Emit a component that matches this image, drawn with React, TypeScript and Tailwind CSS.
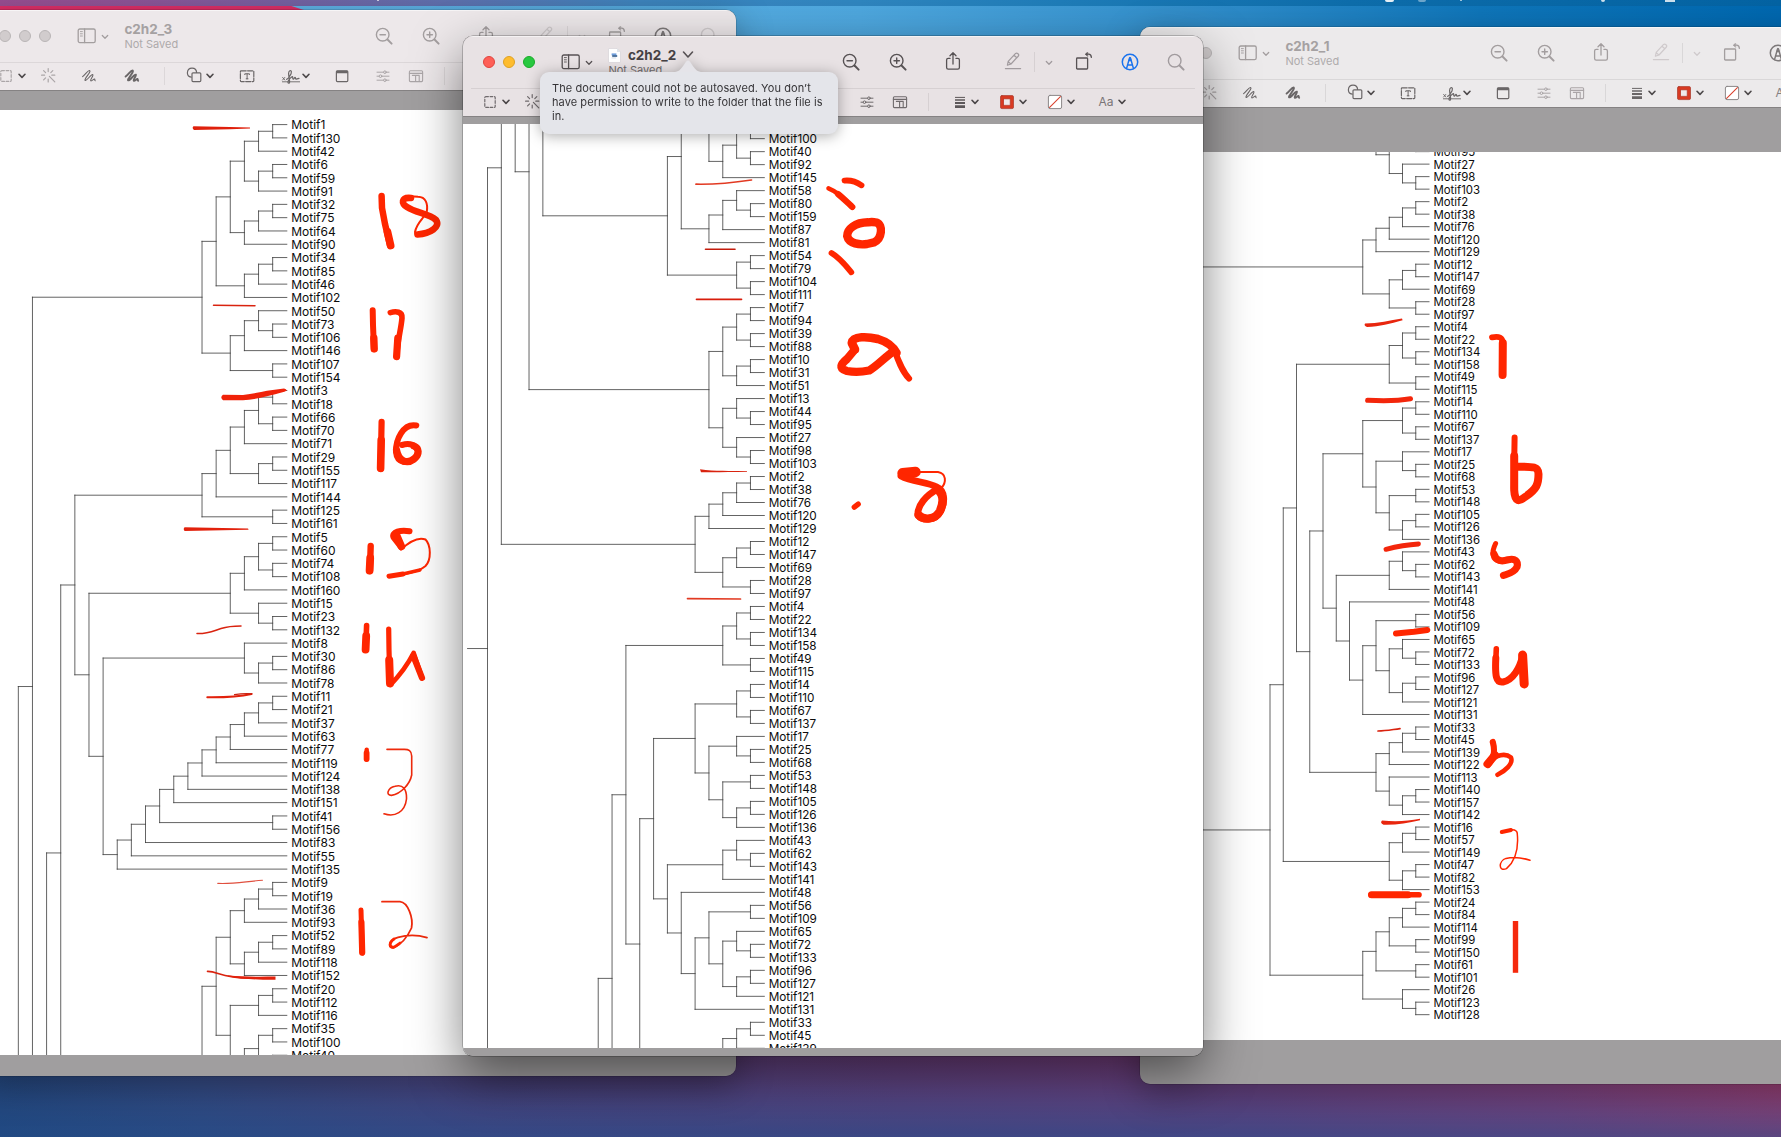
import React from "react";

type Tree = number | [Tree, Tree];

/* Clades of the motif dendrogram, listed top to bottom. */
const cladeA: Tree = [
  [[[[[1, 130], 42], [[6, 59], 91]], [[[32, 75], 64], 90]], [[[34, 85], 46], 102]],
  [[[50, [73, 106]], 146], [107, 154]],
];
const cladeB: Tree = [[[[[[3, 18], [66, 70]], 71], [[29, 155], 117]], 144], [125, 161]];
const cladeC: Tree = [[[[5, 60], [74, 108]], 160], [15, [23, 132]]];
const cladeD: Tree = [8, [[30, 86], 78]];
const cladeE: Tree = [
  [[[[[[[[[[[11, 21], 37], 63], 77], 119], 124], 138], 151], [41, 156]], 83], 55],
  135,
];
const cladeF: Tree = [
  [
    [
      [[[[9, 19], 36], 93], [[[52, 89], 118], 152]],
      [[[20, 112], 116], [[[35, 100], [40, 92]], 145]],
    ],
    [[[58, [80, 159]], 87], 81],
  ],
  [[54, 79], [104, 111]],
];
const cladeG: Tree = [
  [[[7, 94], [39, 88]], [[10, 31], 51]],
  [[13, [44, 95]], [27, [98, 103]]],
];
const cladeH: Tree = [[[[[2, 38], 76], 120], 129], [[[12, 147], 69], [28, 97]]];
const cladeI: Tree = [[[4, 22], [134, 158]], [49, 115]];
const cladeJ: Tree = [
  [[14, 110], [67, 137]],
  [[17, [25, 68]], [[53, 148], [[105, 126], 136]]],
];
const cladeK: Tree = [
  [[43, [62, 143]], 141],
  [48, [[[56, 109], [[65, [72, 133]], [[96, 127], 121]]], 131]],
];
const cladeS: Tree = [[[[33, 45], 139], 122], [113, [[140, 157], 142]]];
const cladeT: Tree = [[[16, 57], 149], [[47, 82], 153]];
const cladeU: Tree = [[[[[24, 84], 114], [99, 150]], [61, 101]], [26, [123, 128]]];

const root: Tree = [
  [[cladeA, [[[cladeB, [cladeC, [cladeD, cladeE]]], cladeF], cladeG]], cladeH],
  [[[cladeI, [[cladeJ, cladeK], cladeS]], cladeT], cladeU],
];

type Seg = [number, number, number, number];
const leaves: number[] = [];
const segs: Seg[] = [];

function walk(t: Tree): { h: number; y: number } {
  if (typeof t === "number") {
    leaves.push(t);
    return { h: 0, y: leaves.length - 1 };
  }
  const a = walk(t[0]);
  const b = walk(t[1]);
  const h = Math.max(a.h, b.h) + 1;
  segs.push([h, a.y, h, b.y], [h, a.y, a.h, a.y], [h, b.y, b.h, b.y]);
  return { h, y: (a.y + b.y) / 2 };
}
const top = walk(root);
segs.push([top.h + 1.44, top.y, top.h, top.y]);

type Ink = { d: string; w?: number; c?: string };

type DocProps = {
  x: number;
  y: number;
  w: number;
  h: number;
  x0: number;
  y0: number;
  dx: number;
  dy: number;
  font: number;
  ink: Ink[];
};

function Dendrogram({ x, y, w, h, x0, y0, dx, dy, font, ink }: DocProps) {
  const d = segs
    .map(
      ([ax, ay, bx, by]) =>
        `M${(x0 - ax * dx).toFixed(2)} ${(y0 + ay * dy).toFixed(2)}L${(x0 - bx * dx).toFixed(2)} ${(y0 + by * dy).toFixed(2)}`,
    )
    .join("");
  return (
    <svg width={w} height={h} viewBox={`${x} ${y} ${w} ${h}`} className="block bg-white">
      <path d={d} stroke="#3c3c3c" strokeWidth={0.8} fill="none" strokeLinecap="square" />
      {leaves.map((n, i) => {
        const ly = y0 + i * dy;
        return ly > y - 10 && ly < y + h + 10 ? (
          <text key={n} x={x0 + 4.4} y={ly + font * 0.4} fontSize={font} fill="#0c0c0c" className="font-['Inter',sans-serif]">
            {"Motif" + n}
          </text>
        ) : null;
      })}
      {ink.map((s, i) =>
        s.w ? (
          <path key={i} d={s.d} stroke={s.c ?? "#ff2600"} strokeWidth={s.w} fill="none" strokeLinecap="round" strokeLinejoin="round" />
        ) : (
          <path key={i} d={s.d} fill={s.c ?? "#ff2600"} />
        ),
      )}
    </svg>
  );
}

const RULE = "#d9230f";

const inkLeft: Ink[] = [
  { d: "M193.5 126.3L230 126.9L250 127.6V128.5L230 129.3L194 129.9Q191.6 128 193.5 126.3Z", c: "#df200c" },
  { d: "M213.5 305.2L255 305.7", w: 1.5, c: RULE },
  { d: "M223 394.8L243 395Q258 393 267 390.8L284 388.4Q287 389 286.5 390.8Q284 392.4 268 396Q252 400.2 243 400.2H223Q219.6 397.5 223 394.8Z", c: "#f02209" },
  { d: "M184.5 527.2L248 528.6L248.6 529.8L184.5 531Q182.8 529 184.5 527.2Z", c: "#e2210c" },
  { d: "M197 633.6C208 634 213 631 221 628.5C228 626.3 234 626 241 626", w: 1.5, c: RULE },
  { d: "M207.3 697.3C225 697.5 238 697 251.5 694", w: 2, c: "#e2210c" },
  { d: "M234.5 694.6C241 693.6 246 693.4 252 693.8", w: 1.2, c: "#c92110" },
  { d: "M217.8 883.4C233 884.3 246 881.4 262.5 880.3", w: 1.1, c: "#e0503f" },
  { d: "M207.5 971.4C218 971.2 220 977.5 250 978.2", w: 1.6, c: RULE },
  { d: "M228 975.6C245 977 262 976.6 275.5 976.6V979.8C260 980 242 979 228 976.4Z", c: "#e2210c" },
  { d: "M381.6 196L382 208L385 224L390.2 245.8", w: 6.5 },
  { d: "M387.5 232L390.6 245.5", w: 7.8 },
  { d: "M411 198C401 197 401 204 407 207C416 213 429 213.5 436 220C441 227 430 233.5 417.5 234.5", w: 6.6 },
  { d: "M410 196.2L418 196.8C426 197 428 204 426.8 211.5C424 219 417 222 415 232C415 235 417 235.5 419 235", w: 2 },
  { d: "M372.7 310.3L373 325L374 349.2", w: 6 },
  { d: "M373.8 338L374.2 348.8", w: 7.4 },
  { d: "M390.3 312.6C396 311 402.5 311.5 402 318C401 330 397.5 340 396.6 357", w: 5.6 },
  { d: "M397.8 338L396.6 356.6", w: 7.2 },
  { d: "M381.6 421.8L380.7 469", w: 6.2 },
  { d: "M381.2 440L380.6 468.4", w: 7.6 },
  { d: "M416.3 425.5C403 423 395.5 440 396 452C397 463.5 408 464.5 415.5 458C422.5 450.5 414 441.5 402 445", w: 6 },
  { d: "M396.5 450C399 463 408 463.5 414 459C420 454 419 448 414 446", w: 7.2 },
  { d: "M370.7 546L369.9 571", w: 6.4 },
  { d: "M370.2 558L369.6 570.6", w: 7.8 },
  { d: "M409.5 531.3C401 529.6 391 532 393.6 537.5L401 547", w: 6 },
  { d: "M396 534L401.4 546.6", w: 7.6 },
  { d: "M401 549.5C409 542 418 536.5 425.5 539.5C431 545 431.5 560 425.5 566C417 573 405 574 389 576", w: 2 },
  { d: "M389 576.2L403 574", w: 5 },
  { d: "M403 574L420 570", w: 3.4 },
  { d: "M366.6 625.6L365.7 650", w: 5.6 },
  { d: "M366.2 636L365.6 649.6", w: 7.8 },
  { d: "M388.7 629L389 650L390 684", w: 5.2 },
  { d: "M389.2 660L390 683.4", w: 8 },
  { d: "M390.5 684.8C398 677 408 664 413.6 653L422 678", w: 4.8 },
  { d: "M413.4 656L422 677.8", w: 6.2 },
  { d: "M366.7 749.6L366.6 759.4", w: 4.4 },
  { d: "M366.6 753L366.6 759", w: 5.8 },
  { d: "M387 749.4H403C409 749 411.5 751 411.7 756V775C410 784 401 794 391.5 795.4C385.5 795.5 387.5 788 395 786.3C403 784 406.8 789 406.5 799C405 812 395 817.5 384 813.8", w: 1.6, c: "#ee2a0c" },
  { d: "M361 910L362.2 953", w: 5 },
  { d: "M361.4 922L362.2 952.6", w: 6.2 },
  { d: "M382 901.7H400C408 902.5 413.5 918 411.5 928C407 938 400 945 393.5 947.8C386 948 390 939.5 398 937.4C408 934.6 418 935 427 937.6", w: 1.8, c: "#ee2a0c" },
  { d: "M400 943C396 946 393 949 390.5 946C389.5 943 391 941 394 939", w: 2.8 },
];

const inkMiddle: Ink[] = [
  { d: "M696 184.2C715 184.6 735 182.5 751.5 180", w: 1.7, c: "#e23a22" },
  { d: "M705.5 249.3H735", w: 1.6, c: "#c41c0c" },
  { d: "M696.5 299.3H741.5", w: 1.7, c: "#d81d0c" },
  { d: "M700 469.2C715 471.4 730 470.6 747 471V471.8C730 472 715 472.6 701 472.2Z", c: RULE },
  { d: "M687.5 598.6L740.5 599", w: 1.7, c: "#e23a22" },
  { d: "M844.5 180.6C851 180 856 181.5 861.5 185.3", w: 5.8 },
  { d: "M828.5 188.3C837 191.5 844 198 852.5 207.3", w: 4.6 },
  { d: "M838 194C843 198 848 203 852.3 207", w: 6.2 },
  { d: "M868 222.3C855 222.5 847.2 229 847.2 236C849 244 860 245 867 244L874 242.4C882 239 883.5 225 876.5 222.5C873 221.8 870 222 868 222.3Z", w: 8.4 },
  { d: "M831.5 253C840 258 847 267 851.3 272.3", w: 5.8 },
  { d: "M855 349.5L851.8 343C853 335.5 868 336.6 878 339C888 342 893.5 347 896.5 353", w: 8.6 },
  { d: "M894 349C898 360 902 371 909 378.5", w: 6.2 },
  { d: "M894 351C885 357 877 366 869 370.6C860 372.4 852 372 847 371C838 368.5 841 364 847 359L854.5 350", w: 8.2 },
  { d: "M854.3 507.2L858.2 504.2", w: 5.4 },
  { d: "M902.5 473.2L915.5 472", w: 10.4 },
  { d: "M901 476C912 482 928 482 936.5 487C946 491 945 504 940 512C935 521 922 521 918 515C917 506 926 495 938 489", w: 6.8 },
  { d: "M938 490C945 496 943 504 940 511C935 520 924 520.5 918.5 515", w: 8.4 },
  { d: "M918 472H938C946.5 473.5 946.5 482 941.5 488", w: 2 },
];

const inkRight: Ink[] = [
  { d: "M1365 323.6C1378 323.4 1390 320.6 1402 318.6L1402.6 320.2C1390 323.6 1380 326.4 1367 327Q1363.6 326 1365 323.6Z", c: "#e8260e" },
  { d: "M1492 337.4C1499 335.8 1502.6 337.5 1502.8 343L1502.6 375", w: 5.8 },
  { d: "M1502.8 343L1502.6 375", w: 8 },
  { d: "M1367.6 400.3C1385 401.2 1399 400.8 1410.5 398.8", w: 5, c: "#f3260b" },
  { d: "M1514.6 437.5L1513.8 488", w: 6 },
  { d: "M1514.2 456L1514.2 490C1514.8 503 1519.5 501.5 1525 497C1537 489 1538.5 484 1538.5 474C1538.4 466.5 1534 466.6 1516 466.6", w: 8 },
  { d: "M1386 549.3C1395 547 1405 544.8 1418.5 544", w: 4.8, c: "#f3260b" },
  { d: "M1495.6 543.5C1491.5 552 1491.5 560 1500 561.3", w: 5 },
  { d: "M1494 554C1496.5 562 1502 561.6 1508 559.8C1515 558 1518.5 561 1517 567C1514 573 1508 574 1503.5 575.4", w: 7.2 },
  { d: "M1396 633.4L1414 631.8L1427.3 630", w: 6 },
  { d: "M1496.3 648.8L1495.5 668", w: 5.6 },
  { d: "M1495.8 658C1495 676 1496 683 1503 682C1513 680 1520 668 1522.5 656", w: 7 },
  { d: "M1522.6 655L1524.2 684", w: 9 },
  { d: "M1378 731C1386 731 1392 729.6 1400 728.6", w: 1.7, c: RULE },
  { d: "M1492.8 742C1495 750 1495 757 1488 765", w: 6.2 },
  { d: "M1495 755L1487.5 764", w: 8 },
  { d: "M1490 762C1496 755 1505 752.5 1511 757.5C1513.5 764 1505 771 1497.5 774.8", w: 4.6 },
  { d: "M1382 820.6C1397 822 1408 821 1420 818.8V820.2C1408 823 1396 825.2 1383.5 824.8Q1379.6 823 1382 820.6Z", c: "#e8260e" },
  { d: "M1501.8 832L1511 830", w: 4 },
  { d: "M1503 831.5C1510 829 1516.5 829 1517.2 833C1519 850 1514 862 1506.5 868.6C1498 872 1498.5 861 1506 858.4C1514 856.5 1523 858 1530 860.3", w: 1.5 },
  { d: "M1371 894.8H1419", w: 5.6 },
  { d: "M1371.5 894.8H1408", w: 7 },
  { d: "M1512.8 921H1518.2V972.8H1512.8Z", c: "#f5290d" },
];

/* ---------- toolbar glyphs ---------- */

function Glyph({ children, w = 20, sw = 1.2, className = "" }: { children: React.ReactNode; w?: number; sw?: number; className?: string }) {
  return (
    <svg
      width={w}
      height={20}
      viewBox={`0 0 ${w} 20`}
      fill="none"
      stroke="currentColor"
      strokeWidth={sw}
      strokeLinecap="round"
      strokeLinejoin="round"
      className={"shrink-0 " + className}
    >
      {children}
    </svg>
  );
}

const Chevron = ({ className = "", sw = 1.6 }: { className?: string; sw?: number }) => (
  <Glyph w={10} sw={sw} className={className}>
    <path d="M2 8.3L5 11.4L8 8.3" />
  </Glyph>
);

function Magnifier({ kind, className = "" }: { kind: "plus" | "minus" | "none"; className?: string }) {
  return (
    <Glyph sw={1.4} className={className}>
      <circle cx={8.7} cy={8.7} r={6.3} />
      <path d="M13.5 13.5L17.6 17.6" strokeWidth={2} />
      {kind !== "none" && <path d="M6 8.7H11.4" />}
      {kind === "plus" && <path d="M8.7 6V11.4" />}
    </Glyph>
  );
}

type Tone = {
  bar: string;
  icon: string;
  dim: string;
  title: string;
  sub: string;
  mark: string;
  tool: string;
  toolDim: string;
  chev: string;
  rule: string;
};

const activeTone: Tone = {
  bar: "bg-[#e8e2e4]",
  icon: "text-[#575254]",
  dim: "text-[#a19b9e]",
  title: "text-[#454143]",
  sub: "text-[#6f6a6c]",
  mark: "text-[#1a73ee]",
  tool: "text-[#5c5759]",
  toolDim: "text-[#6f6a6c]",
  chev: "text-[#4b4648]",
  rule: "bg-[#d6d0d2]",
};
const pinkTone: Tone = {
  bar: "bg-[#ede8ea]",
  icon: "text-[#a39e9f]",
  dim: "text-[#cfcacc]",
  title: "text-[#a5a1a2]",
  sub: "text-[#aeaaab]",
  mark: "text-[#7d797a]",
  tool: "text-[#6a6667]",
  toolDim: "text-[#aaa5a7]",
  chev: "text-[#4e4a4b]",
  rule: "bg-[#dcd7d9]",
};
const greyTone: Tone = {
  ...pinkTone,
  bar: "bg-[#eceaeb]",
  rule: "bg-[#d9d7d8]",
};

function Titlebar({ name, active, tone }: { name: string; active: boolean; tone: Tone }) {
  const light = active
    ? ["bg-[#fe5f57] border-[#e0443e]", "bg-[#febc2e] border-[#dea123]", "bg-[#28c840] border-[#1aab29]"]
    : ["bg-[#d1cccd] border-[#b9b5b6]", "bg-[#d1cccd] border-[#b9b5b6]", "bg-[#d1cccd] border-[#b9b5b6]"];
  return (
    <div className={"flex h-[52px] shrink-0 items-center pr-[17px] pl-5 " + tone.icon}>
      <div className="flex gap-2">
        {light.map((c, i) => (
          <span key={i} className={"size-3 rounded-full border " + c} />
        ))}
      </div>
      <Glyph className="ml-[26px]" sw={1.3}>
        <rect x={1.2} y={3} width={17} height={13.6} rx={1.6} />
        <path d="M7.6 3V16.6" />
        <path d="M3.4 5.6H5.4M3.4 7.8H5.4M3.4 10H5.4" strokeWidth={0.9} />
      </Glyph>
      <Chevron className="ml-[3px] pt-[2px]" sw={1.4} />
      <div className="ml-[14.4px] flex flex-col font-['Inter',sans-serif]">
        <div className="flex h-4 items-center">
          {active && (
            <svg width={13} height={15} viewBox="0 0 13 15" className="mr-[6.5px] shrink-0">
              <path d="M.5 1.5a1 1 0 0 1 1-1H9L12.5 4V13.5a1 1 0 0 1-1 1H1.5a1 1 0 0 1-1-1Z" fill="#fff" stroke="#d2cfd3" strokeWidth={0.6} />
              <path d="M9 .5V4H12.5Z" fill="#dfe4ea" />
              <rect x={3.6} y={5.4} width={4.8} height={2} fill="#6f9ddb" />
              <rect x={4.2} y={7.2} width={5} height={1.6} fill="#2f5a8c" />
              <rect x={3.6} y={9.6} width={4.6} height={0.7} fill="#b8c6d8" />
            </svg>
          )}
          <span className={"text-[13.5px] leading-4 font-bold " + tone.title}>{name}</span>
          {active && (
            <svg width={12} height={10} viewBox="0 0 12 10" className="ml-[6px] shrink-0" fill="none" stroke="#575254" strokeWidth={1.6} strokeLinecap="round" strokeLinejoin="round">
              <path d="M1.5 2L6 7L10.5 2" />
            </svg>
          )}
        </div>
        <span className={"text-[11px] leading-[14px] " + tone.sub}>Not Saved</span>
      </div>
      <div className="ml-auto flex items-center">
        <Magnifier kind="minus" />
        <Magnifier kind="plus" className="ml-[27px]" />
        <Glyph className="ml-[34.5px]" sw={1.3}>
          <path d="M7 6.4H5.2A1.6 1.6 0 0 0 3.6 8V15.6A1.6 1.6 0 0 0 5.2 17.2H14.8A1.6 1.6 0 0 0 16.4 15.6V8A1.6 1.6 0 0 0 14.8 6.4H13" />
          <path d="M10 12V1M7 3.8L10 .8L13 3.8" />
        </Glyph>
        <Glyph className={"ml-[40.5px] " + tone.dim} sw={1.2}>
          <path d="M4.4 13.2L5.2 9.4L12.6 1.4Q13.8 .6 15 1.8Q16.2 2.8 15.4 4L8 12L4.4 13.2ZM11 3.2L13.8 5.8M5.2 9.6L7.8 12" />
          <path d="M2.4 16.6H17.6" />
        </Glyph>
        <span className={"ml-[11px] h-5 w-px " + tone.rule} />
        <Chevron className={"ml-[9px] pt-[2px] " + tone.dim} sw={1.4} />
        <Glyph className="ml-[20px]" sw={1.3}>
          <rect x={2.6} y={6} width={11} height={11} rx={0.8} />
          <path d="M12 2.2H14.6Q17.2 2.2 17.4 5.4" />
          <path d="M13.4 .2L11.4 2.2L13.4 4.2Z" fill="currentColor" strokeWidth={0.6} />
        </Glyph>
        <Glyph className={"ml-[26px] " + tone.mark} sw={1.5}>
          <circle cx={10} cy={10} r={7.7} />
          <path d="M6.6 16.4L9.4 6.4Q10 5 10.6 6.4L13.4 16.4M7.7 13H12.3" />
          <path d="M9.2 8.6L10 5.6L10.8 8.6Z" fill="currentColor" />
        </Glyph>
        <Magnifier kind="none" className={"ml-[26px] " + tone.dim} />
      </div>
    </div>
  );
}

function MarkupBar({ tone, active }: { tone: Tone; active: boolean }) {
  return (
    <div className={"flex h-[27px] shrink-0 items-center overflow-hidden pb-[1.4px] pl-[17px] " + tone.tool}>
      <Glyph className={tone.toolDim}>
        <rect x={4.8} y={4.6} width={10.4} height={10.8} rx={1} strokeDasharray="2.6 1.7" />
      </Glyph>
      <Chevron className={"ml-px " + tone.chev} />
      <Glyph className={"ml-[12px] " + tone.toolDim}>
        <path d="M10.4 10.4L15.8 15.8M9.2 2.6V5.6M9.2 13V16M2.6 9.2H5.6M12.8 9.2H15.8M4.6 4.6L6.6 6.6M13.8 4.6L11.8 6.6M4.6 13.8L6.6 11.8" />
      </Glyph>
      <Glyph className="ml-[19.5px]" sw={1.1}>
        <path d="M3.6 10.6C7 8 9 4 10.8 4.6C12.4 5.6 4.6 13.6 6.2 14.4C8 15 12 8 13.8 8.6C15 9.4 10.6 14 11.8 14.8C13 15.4 14.6 12.6 15.6 13C16.2 13.4 15.4 14.6 16.2 14.8" />
      </Glyph>
      <Glyph className="ml-[23.5px]" sw={1.9}>
        <path d="M3.6 10.6C7 8 9 4 10.8 4.6C12.4 5.6 4.6 13.6 6.2 14.4C8 15 12 8 13.8 8.6C15 9.4 10.6 14 11.8 14.8C13 15.4 14.6 12.6 15.6 13C16.2 13.4 15.4 14.6 16.2 14.8" />
      </Glyph>
      <span className={"ml-[22px] h-[18px] w-px shrink-0 " + tone.rule} />
      <Glyph className="ml-[20px]">
        <path d="M6.2 11.2A4.6 4.6 0 1 1 11.6 6.4" />
        <rect x={7} y={6.8} width={8.8} height={8.8} rx={1} />
      </Glyph>
      <Chevron className={tone.chev} />
      <Glyph className="ml-[21.5px]">
        <rect x={3.4} y={4.8} width={13.4} height={10.8} rx={0.8} strokeDasharray="5 1.4" />
        <path d="M7.8 8.6V7.8H12.4V8.6M10.1 7.8V12.8M9.2 12.8H11" strokeWidth={1} />
      </Glyph>
      <Glyph className="ml-[24px]" sw={1.2}>
        <path d="M1.6 11.4L3.8 14M3.8 11.4L1.6 14M1.4 15.8H18.6" strokeWidth={0.9} />
        <path d="M5.6 13.4C7 13 10.8 8 10.4 5.6C10 3.8 7.6 4.4 7.6 7.6C7.8 12 9.8 17.4 7.6 17.2C5.8 16.6 8 12.8 11 10.8C12.4 10 11.2 13.4 12.4 13.2C13.4 12.8 13.6 11 14.2 11.4C14.8 12 14.2 13.4 15.2 13.2L18 12.4" />
      </Glyph>
      <Chevron className={tone.chev} />
      <Glyph className="ml-[21px]">
        <rect x={4.4} y={4.8} width={11.4} height={10.8} rx={1} />
        <path d="M4.4 6H15.8" strokeWidth={2.4} strokeLinecap="butt" />
      </Glyph>
      <Glyph className={"ml-[21px] " + tone.toolDim} sw={1}>
        <path d="M4 6.2H10.4M13.4 6.2H16M4 10.2H6M9 10.2H16M4 14.2H10.4M13.4 14.2H16" />
        <circle cx={11.9} cy={6.2} r={1.3} />
        <circle cx={7.5} cy={10.2} r={1.3} />
        <circle cx={11.9} cy={14.2} r={1.3} />
      </Glyph>
      <Glyph className={"ml-[13px] " + tone.toolDim} sw={1.1}>
        <rect x={3.4} y={4.8} width={13.2} height={10.8} rx={1} />
        <path d="M3.4 7.4H16.6M9.6 9.4V15.4M6.4 9.4H13.2V15.4" />
      </Glyph>
      <span className={"ml-[18px] h-[18px] w-px shrink-0 " + tone.rule} />
      <Glyph className="ml-[21px]">
        <path d="M5 5.4H15" strokeWidth={1} strokeLinecap="butt" />
        <path d="M5 8H15" strokeWidth={1.4} strokeLinecap="butt" />
        <path d="M5 11H15" strokeWidth={2} strokeLinecap="butt" />
        <path d="M5 14.6H15" strokeWidth={2.8} strokeLinecap="butt" />
      </Glyph>
      <Chevron className={"ml-[.5px] " + tone.chev} />
      <Glyph className="ml-[16.8px]">
        <rect x={3.5} y={3.6} width={13} height={13} rx={1.4} fill="#d93a22" stroke="#a8382a" strokeWidth={0.7} />
        <rect x={6.8} y={6.9} width={6.4} height={6.4} fill="#efe9ea" stroke="#a8382a" strokeWidth={0.6} />
      </Glyph>
      <Chevron className={"ml-[1.7px] " + tone.chev} />
      <Glyph className="ml-[16.7px]">
        <rect x={3.4} y={3.4} width={13.2} height={13.2} rx={1.6} fill="#fff" stroke="#8b8788" strokeWidth={1} />
        <path d="M4.6 15.4L15.4 4.6" stroke="#d9402c" strokeWidth={1.1} />
      </Glyph>
      <Chevron className={"ml-[1.3px] " + tone.chev} />
      <span className={"ml-[22px] w-[16px] shrink-0 font-['Inter',sans-serif] text-[12px] leading-5 " + (active ? "text-[#7a7577]" : "text-[#858182]")}>Aa</span>
      <Chevron className={"ml-[2.7px] " + tone.chev} />
    </div>
  );
}

type WinProps = {
  name: string;
  active?: boolean;
  tone: Tone;
  place: string;
  shadow: string;
  gap: string;
  ruleInset: string;
  doc: DocProps;
};

function PreviewWindow({ name, active = false, tone, place, shadow, gap, ruleInset, doc }: WinProps) {
  return (
    <section className={"absolute rounded-[10px] " + place + " " + shadow}>
      <div className="flex h-full flex-col overflow-hidden rounded-[10px] bg-[#a09e9f]">
        <header className={"flex shrink-0 flex-col border-b border-[#858283] shadow-[inset_0_1px_0_rgba(255,255,255,.55)] " + tone.bar}>
          <Titlebar name={name} active={active} tone={tone} />
          <span className={"h-px " + ruleInset + " " + tone.rule} />
          <MarkupBar tone={tone} active={active} />
        </header>
        <div className={gap}>
          <Dendrogram {...doc} />
        </div>
      </div>
    </section>
  );
}

export default function App() {
  return (
    <div className="relative flex h-[1137px] w-[1781px] flex-col overflow-hidden bg-[#3c477e]">
      <div className="flex h-[6px] shrink-0 items-start bg-[linear-gradient(90deg,#9a4f92_0px,#8d5699_150px,#7463a4_300px,#5f74b2_460px,#3f86c0_640px,#2f85be_860px,#1f7cb8_1060px,#0e6dab_1350px,#0463a3_1781px)]">
        <span className="ml-[377px] h-px w-[2px] bg-white/70" />
        <span className="ml-[1006px] h-[2px] w-[9px] rounded-b bg-white/90" />
        <span className="ml-[24px] h-[2px] w-[8px] rounded-b bg-white/40" />
        <span className="ml-[34px] h-px w-[2px] bg-white/60" />
        <span className="ml-[139px] h-[2px] w-[4px] rounded-b bg-white/80" />
        <span className="ml-[60px] h-[2px] w-[10px] bg-white/80" />
      </div>
      <div className="h-[594px] shrink-0 bg-[linear-gradient(90deg,#64b6e8_0px,#5cb0e4_480px,#4ea7de_860px,#3390cd_1180px,#0f76ba_1480px,#0068b0_1781px)]">
        <div className="h-[6px] w-[310px] bg-[#de2f68] [clip-path:polygon(0_0,94%_0,100%_100%,0_100%)]" />
      </div>
      <div className="flex grow flex-col justify-end bg-[linear-gradient(90deg,#25457a_0px,#38487f_200px,#56437f_480px,#6b3f7c_900px,#7d3f7f_1250px,#9a3f7c_1550px,#bb3c70_1781px)]">
        <div className="h-[90px] bg-[linear-gradient(180deg,transparent_10%,rgba(30,76,136,.62)_100%)]" />
      </div>

      <PreviewWindow
        name="c2h2_3"
        tone={pinkTone}
        place="left-[-21px] top-[10px] h-[1066px] w-[757px]"
        shadow="shadow-[0_0_0_.5px_rgba(0,0,0,.25),0_10px_36px_rgba(0,0,0,.34)]"
        gap="pt-[19px]"
        ruleInset="w-full"
        doc={{ x: -21, y: 110, w: 757, h: 945, x0: 286.8, y0: 124.6, dx: 14.13, dy: 13.295, font: 12, ink: inkLeft }}
      />
      <PreviewWindow
        name="c2h2_1"
        tone={greyTone}
        place="left-[1140px] top-[27px] h-[1057px] w-[711px]"
        shadow="shadow-[0_0_0_.5px_rgba(0,0,0,.25),0_10px_36px_rgba(0,0,0,.34)]"
        gap="pt-[44px]"
        ruleInset="w-full"
        doc={{ x: 1140, y: 152, w: 711, h: 888, x0: 1429, y0: -986.6, dx: 13.25, dy: 12.508, font: 11.4, ink: inkRight }}
      />
      <PreviewWindow
        name="c2h2_2"
        active
        tone={activeTone}
        place="left-[463px] top-[36px] h-[1020px] w-[740px]"
        shadow="shadow-[0_0_0_.5px_rgba(0,0,0,.4),0_18px_50px_rgba(0,0,0,.5)]"
        gap="pt-[7px]"
        ruleInset="mx-2"
        doc={{ x: 463, y: 124, w: 740, h: 924, x0: 764.3, y0: -758, dx: 13.84, dy: 12.995, font: 11.75, ink: inkMiddle }}
      />

      <div className="absolute top-[60px] left-[540px] flex w-[298px] flex-col drop-shadow-[0_2px_7px_rgba(0,0,0,.32)]">
        <svg width={26} height={12} viewBox="0 0 26 12" className="ml-[135px] block">
          <path d="M0 12C5 11 6.5 8.4 10.6 2.2Q13 -1 15.4 2.2C19.5 8.4 21 11 26 12Z" fill="#e5e4e9" />
        </svg>
        <p className="h-[62px] rounded-[9px] bg-[#e4e5ea] pt-[9px] pl-3 font-['Inter',sans-serif] text-[11px] leading-[14px] tracking-[0.075px] whitespace-nowrap text-[#353437]">
          The document could not be autosaved. You don’t
          <br />
          have permission to write to the folder that the file is
          <br />
          in.
        </p>
      </div>
    </div>
  );
}
